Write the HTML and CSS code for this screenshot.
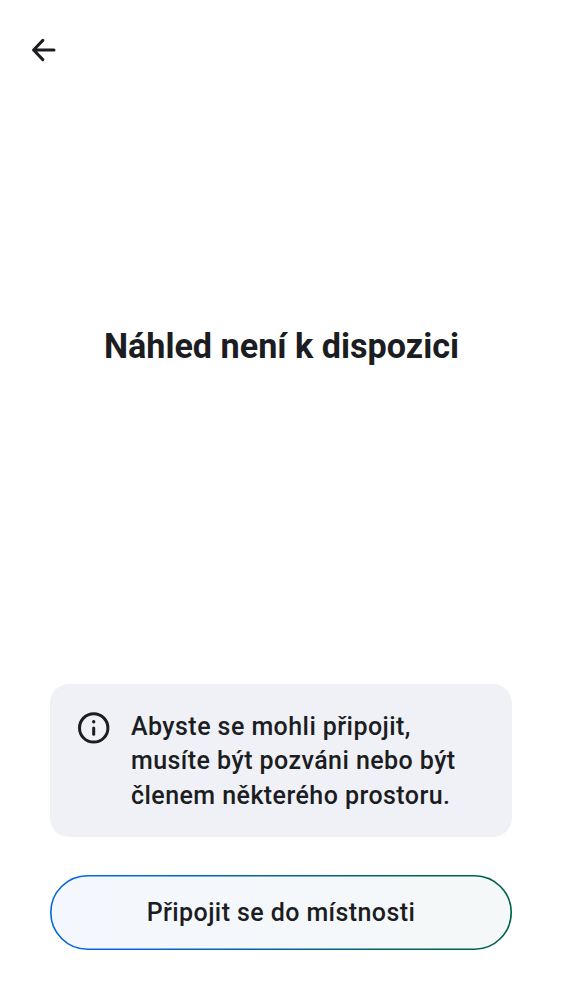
FILE: index.html
```html
<!DOCTYPE html>
<html lang="cs">
<head>
<meta charset="utf-8">
<title>Náhled není k dispozici</title>
<link rel="stylesheet" href="styles.css">
</head>
<body>
<div class="screen">
  <header class="topbar">
    <svg class="back" viewBox="0 0 24 24" role="img" aria-label="Zpět"><path d="M22 12H1.6M10.8 2.4 1.6 12l9.2 9.6"/></svg>
  </header>
  <main class="content"><h1 class="title">Náhled není k dispozici</h1></main>
  <footer class="footer">
    <div class="notice">
      <svg class="info" viewBox="0 0 32 32" aria-hidden="true"><circle class="ring" cx="15.7" cy="15.9" r="14.2"/><circle cx="15.7" cy="9.7" r="1.7"/><path class="stem" d="M15.7 16v6.2"/></svg>
      <p class="message">Abyste se mohli připojit,<br>musíte být pozváni nebo být<br>členem některého prostoru.</p>
    </div>
    <button class="join">
      <svg class="outline" viewBox="0 0 462 75" aria-hidden="true">
        <defs>
          <linearGradient id="edge" gradientUnits="userSpaceOnUse" x1="80" y1="0" x2="390" y2="0"><stop offset="0" stop-color="#0467dd"/><stop offset=".52" stop-color="#006693"/><stop offset="1" stop-color="#00614f"/></linearGradient>
          <linearGradient id="fill"><stop offset="0" stop-color="#f4f8fe"/><stop offset="1" stop-color="#f4f8f8"/></linearGradient>
        </defs>
        <rect x=".8" y=".8" width="460.4" height="73.4" rx="36.7" fill="url(#fill)" stroke="url(#edge)" stroke-width="1.6"/>
      </svg>
      <span class="label">Připojit se do místnosti</span>
    </button>
  </footer>
</div>
</body>
</html>
```
FILE: styles.css
```css
* { box-sizing: border-box; }
body { margin: 0; background: #fff; color: #1b1d22; font-family: Roboto, sans-serif; }
.screen { height: 1000px; display: flex; flex-direction: column; }
.topbar { height: 100px; padding: 38px 32px; }
.back { display: block; width: 24px; height: 24px; fill: none; stroke: #1b1d22; stroke-width: 3; stroke-linecap: round; stroke-linejoin: round; }
.content { flex: 1; padding-top: 224px; }
.title { margin: 0; padding-left: 1px; text-align: center; font-size: 34.15px; line-height: 44px; font-weight: 700; }
.footer { padding: 0 50px 50px; }
.notice { height: 153px; display: flex; gap: 21px; padding: 25px 28px; border-radius: 19px; background: #f0f1f6; }
.info { flex: none; width: 32px; height: 32px; margin-top: 3px; fill: #1b1d22; }
.ring, .stem { fill: none; stroke: #1b1d22; stroke-width: 3; stroke-linecap: round; }
.message { margin: 1px 0 0; font-size: 25px; line-height: 34.4px; font-weight: 500; letter-spacing: .44px; white-space: nowrap; }
.join { position: relative; display: block; width: 100%; height: 75px; margin-top: 38px; padding: 0; border: 0; border-radius: 38px; background: none; color: #1b1d22; font: 500 25px/34px Roboto, sans-serif; letter-spacing: .41px; }
.outline { position: absolute; inset: 0; width: 100%; height: 100%; }
.label { position: relative; }
```
